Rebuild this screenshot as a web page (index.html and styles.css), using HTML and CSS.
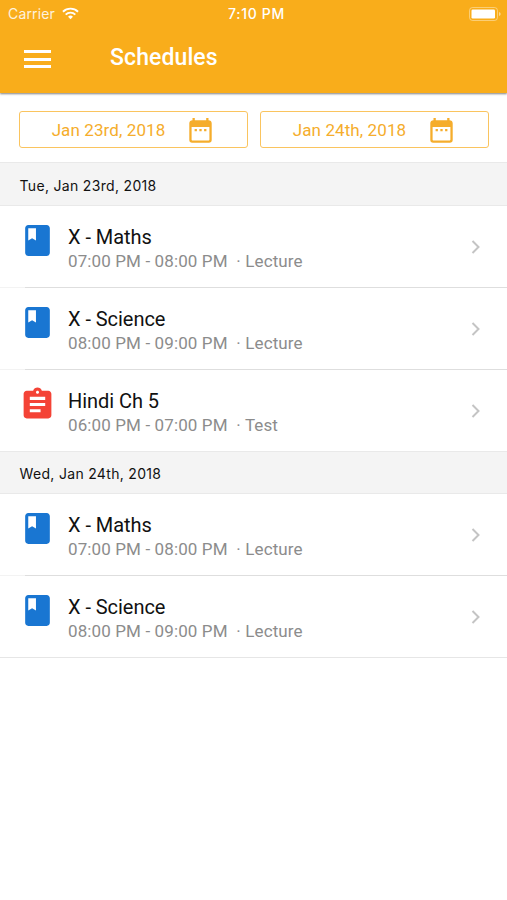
FILE: index.html
```html
<!DOCTYPE html>
<html lang="en">
<head>
    <meta charset="UTF-8">
    <meta name="viewport" content="width=device-width, initial-scale=1.0">
    <title>Schedules</title>
    <link rel="stylesheet" href="styles.css">
</head>
<body>
    <!-- Shared icons -->
    <svg class="icon-defs" width="0" height="0">
        <symbol id="icon-book" viewBox="0 0 24 24">
            <path d="M18 2H6c-1.1 0-2 .9-2 2v16c0 1.1.9 2 2 2h12c1.1 0 2-.9 2-2V4c0-1.1-.9-2-2-2zM6 4h5v8l-2.500-1.500L6 12V4z"/>
        </symbol>
        <symbol id="icon-test" viewBox="0 0 24 24">
            <path d="M19 3h-4.180C14.400 1.840 13.300 1 12 1c-1.300 0-2.400.840-2.820 2H5c-1.100 0-2 .900-2 2v14c0 1.100.900 2 2 2h14c1.100 0 2-.900 2-2V5c0-1.100-.900-2-2-2zm-7 0c.550 0 1 .450 1 1s-.450 1-1 1-1-.450-1-1 .450-1 1-1zm2 14H7v-2h7v2zm3-4H7v-2h10v2zm0-4H7V7h10v2z"/>
        </symbol>
        <symbol id="icon-calendar" viewBox="0 0 23 25">
            <path fill-rule="evenodd" d="M3.500 0h2.300v2.200h11.400V0h2.300v2.200c1.900 0 3.200 1.200 3.200 3V22c0 1.700-1.100 2.800-2.800 2.800H3.100C1.400 24.800.3 23.700.3 22V5.200c0-1.800 1.300-3 3.200-3zM2.600 9v12.600c0 .6.400 1 1 1h15.800c.6 0 1-.4 1-1V9z"/>
            <path d="M5.600 11h2.300v2.300H5.600zM10.350 11h2.300v2.300h-2.300zM15.100 11h2.300v2.300h-2.300z"/>
        </symbol>
        <symbol id="icon-chevron" viewBox="0 0 10 16">
            <path d="M1.500 2L7.500 8L1.500 14" fill="none" stroke="currentColor" stroke-width="2"/>
        </symbol>
    </svg>

    <header class="header">
        <div class="status-bar">
            <div class="status-left">
                <span class="carrier">Carrier</span>
                <svg class="wifi" viewBox="0 0 18 13">
                    <path class="arc" d="M1 4.600a11.500 11.500 0 0 1 16 0"/>
                    <path class="arc" d="M3.900 7.700a7.200 7.200 0 0 1 10.200 0"/>
                    <path d="M9 12.600L6.400 10a3.700 3.700 0 0 1 5.200 0z"/>
                </svg>
            </div>
            <span class="time">7:10 PM</span>
            <div class="status-right">
                <svg class="battery" viewBox="0 0 32 14">
                    <rect x="0.500" y="0.500" width="28" height="13" rx="3" fill="none" stroke="#fff" stroke-opacity="0.400"/>
                    <rect x="2.500" y="2.500" width="23.500" height="9" rx="1.200"/>
                    <path d="M30 5v4q1.700-.700 1.700-2T30 5z" fill-opacity="0.500"/>
                </svg>
            </div>
        </div>
        <nav class="nav-bar">
            <button class="menu-btn" aria-label="Menu"><span></span><span></span><span></span></button>
            <h1>Schedules</h1>
        </nav>
    </header>

    <div class="date-range">
        <button class="date-btn">Jan 23rd, 2018<svg class="calendar"><use href="#icon-calendar"/></svg></button>
        <button class="date-btn">Jan 24th, 2018<svg class="calendar"><use href="#icon-calendar"/></svg></button>
    </div>

    <h2 class="day">Tue, Jan 23rd, 2018</h2>
    <ul class="list">
        <li class="item">
            <svg class="icon lecture"><use href="#icon-book"/></svg>
            <div class="info">
                <div class="name">X - Maths</div>
                <div class="detail">07:00 PM - 08:00 PM &nbsp;· Lecture</div>
            </div>
            <svg class="chevron"><use href="#icon-chevron"/></svg>
        </li>
        <li class="item">
            <svg class="icon lecture"><use href="#icon-book"/></svg>
            <div class="info">
                <div class="name">X - Science</div>
                <div class="detail">08:00 PM - 09:00 PM &nbsp;· Lecture</div>
            </div>
            <svg class="chevron"><use href="#icon-chevron"/></svg>
        </li>
        <li class="item">
            <svg class="icon test"><use href="#icon-test"/></svg>
            <div class="info">
                <div class="name">Hindi Ch 5</div>
                <div class="detail">06:00 PM - 07:00 PM &nbsp;· Test</div>
            </div>
            <svg class="chevron"><use href="#icon-chevron"/></svg>
        </li>
    </ul>

    <h2 class="day next">Wed, Jan 24th, 2018</h2>
    <ul class="list last">
        <li class="item">
            <svg class="icon lecture"><use href="#icon-book"/></svg>
            <div class="info">
                <div class="name">X - Maths</div>
                <div class="detail">07:00 PM - 08:00 PM &nbsp;· Lecture</div>
            </div>
            <svg class="chevron"><use href="#icon-chevron"/></svg>
        </li>
        <li class="item">
            <svg class="icon lecture"><use href="#icon-book"/></svg>
            <div class="info">
                <div class="name">X - Science</div>
                <div class="detail">08:00 PM - 09:00 PM &nbsp;· Lecture</div>
            </div>
            <svg class="chevron"><use href="#icon-chevron"/></svg>
        </li>
    </ul>
</body>
</html>
```
FILE: styles.css
```css
* {
    box-sizing: border-box;
}
body {
    margin: 0;
    background-color: #fff;
    font-family: Roboto, sans-serif;
    color: #111;
}
svg {
    display: block;
    flex-shrink: 0;
    fill: currentColor;
}
.icon-defs {
    position: absolute;
}
h1, h2, ul {
    margin: 0;
    padding: 0;
}
button {
    font-family: inherit;
    background: none;
    border: none;
    padding: 0;
}

/* Header */
.header {
    height: 93px;
    background-color: #f9ad1b;
    color: #fff;
    box-shadow: 0 1px 2px rgba(0, 0, 0, 0.5);
}
.status-bar {
    display: grid;
    grid-template-columns: 1fr auto 1fr;
    align-items: center;
    height: 27px;
    padding: 0 6px 0 8px;
    font-family: Inter, sans-serif;
    font-size: 14px;
}
.status-left {
    display: flex;
    align-items: center;
    gap: 7px;
}
.carrier {
    opacity: 0.85;
    letter-spacing: 0.15px;
}
.wifi {
    width: 17px;
    height: 13px;
}
.arc {
    fill: none;
    stroke: #fff;
    stroke-width: 2;
}
.time {
    padding-left: 4px;
    font-weight: 500;
    letter-spacing: 0.7px;
}
.status-right {
    display: flex;
    justify-content: flex-end;
}
.battery {
    width: 32px;
    height: 14px;
}
.nav-bar {
    display: flex;
    align-items: center;
    gap: 59px;
    height: 60px;
    padding-left: 24px;
}
.menu-btn {
    display: flex;
    flex-direction: column;
    gap: 4.5px;
    width: 27px;
    padding-top: 4px;
}
.menu-btn span {
    height: 3px;
    background-color: #fff;
}
h1 {
    font-size: 23px;
    font-weight: 500;
    letter-spacing: 0.1px;
}

/* Date pickers */
.date-range {
    display: grid;
    grid-template-columns: 1fr 1fr;
    gap: 12px;
    padding: 18px 18px 14px 19px;
}
.date-btn {
    display: flex;
    align-items: center;
    justify-content: center;
    gap: 24px;
    height: 37px;
    padding: 0 3px 0 0;
    border: 1px solid #fac45f;
    border-radius: 3px;
    color: #f5ad2c;
    font-size: 17px;
    letter-spacing: 0.1px;
}
.calendar {
    width: 23px;
    height: 25px;
    margin-top: 1px;
}

/* Lists */
.day {
    height: 44px;
    padding-left: 19.5px;
    border-top: 1px solid #e9e9e9;
    border-bottom: 1px solid #e9e9e9;
    background-color: #f4f4f4;
    font-family: Inter, sans-serif;
    font-size: 14px;
    font-weight: 400;
    letter-spacing: 0.32px;
    line-height: 45px;
}
.day.next {
    height: 43px;
    line-height: 44px;
}
.list {
    list-style: none;
}
.last {
    border-bottom: 1px solid #e6e6e6;
}
.item {
    display: flex;
    align-items: flex-start;
    height: 81px;
    padding: 16px 26px 0 19px;
}
.item + .item {
    height: 82px;
    padding-top: 17px;
    background: linear-gradient(90deg, #f3f3f3 25px, #dedede 25px) 0 0 / 100% 1px no-repeat;
}
.icon {
    width: 37px;
    height: 37px;
}
.lecture {
    color: #1976d2;
}
.test {
    color: #f44336;
}
.info {
    flex: 1;
    padding-left: 12px;
}
.name {
    font-size: 20px;
    letter-spacing: -0.05px;
    line-height: 30px;
}
.detail {
    margin-top: -1px;
    color: #8c8c8c;
    font-size: 17px;
    letter-spacing: 0.12px;
    line-height: 20px;
}
.chevron {
    width: 10px;
    height: 16px;
    margin-top: 17px;
    color: #c4c4c4;
}
```
